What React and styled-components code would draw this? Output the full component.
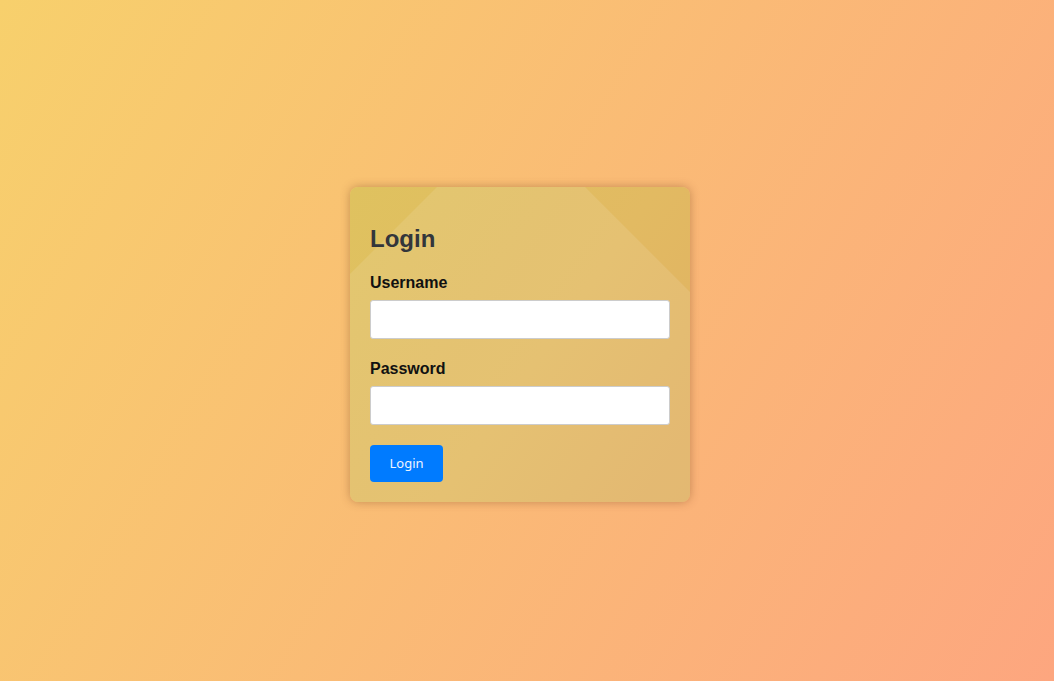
import React from "react";
import styled, { createGlobalStyle } from "styled-components";

const Global = createGlobalStyle`
  html, body { margin: 0; padding: 0; height: 100%; }
  body {
    font-family: "Liberation Sans", Arial, sans-serif;
    background: linear-gradient(120deg, #f7d06c 0%, #fda67f 100%);
    background-attachment: fixed;
  }
  #root { min-height: 100vh; }
`;

const Page = styled.div`
  min-height: 100vh;
  box-sizing: border-box;
  display: flex;
  align-items: center;
  justify-content: center;
  padding: 7px 14px 0 0;
`;

const Card = styled.div`
  position: relative;
  overflow: hidden;
  width: 340px;
  box-sizing: border-box;
  padding: 20px;
  border-radius: 8px;
  background: linear-gradient(125deg, #dfc25f 0%, #e2ba62 55%, #e0b062 100%);
  box-shadow: 0 0 10px rgba(110, 60, 25, 0.38);

  &::before {
    content: "";
    position: absolute;
    left: 161px;
    top: -74px;
    width: 800px;
    height: 800px;
    transform-origin: 0 0;
    transform: rotate(45deg);
    background: rgba(255, 255, 255, 0.1);
    pointer-events: none;
  }
`;

const Content = styled.div`
  position: relative;
`;

const Title = styled.h2`
  margin: 18px 0 21px;
  font-size: 24px;
  font-weight: 700;
  color: #33363b;
`;

const Group = styled.div`
  margin-bottom: ${(p) => (p.$first ? 21 : 20)}px;
`;

const Label = styled.label`
  display: block;
  margin-bottom: 8px;
  font-size: 16px;
  font-weight: 700;
  color: #111;
`;

const Input = styled.input`
  display: block;
  width: 100%;
  height: 39px;
  box-sizing: border-box;
  padding: 8px 10px;
  border: 1px solid #cccccc;
  border-radius: 3px;
  background: #fff;
  font-size: 14px;
  outline: none;
`;

const Button = styled.button`
  display: block;
  height: 37px;
  padding: 0 19.5px;
  border: none;
  border-radius: 4px;
  background: #007bff;
  color: #eef4ff;
  font-family: "Noto Sans", "Open Sans", sans-serif;
  font-size: 13px;
  cursor: pointer;
`;

export default function App() {
  return (
    <>
      <Global />
      <Page>
        <Card>
          <Content>
            <Title>Login</Title>
            <Group $first>
              <Label htmlFor="username">Username</Label>
              <Input id="username" type="text" />
            </Group>
            <Group>
              <Label htmlFor="password">Password</Label>
              <Input id="password" type="password" />
            </Group>
            <Button type="button">Login</Button>
          </Content>
        </Card>
      </Page>
    </>
  );
}
